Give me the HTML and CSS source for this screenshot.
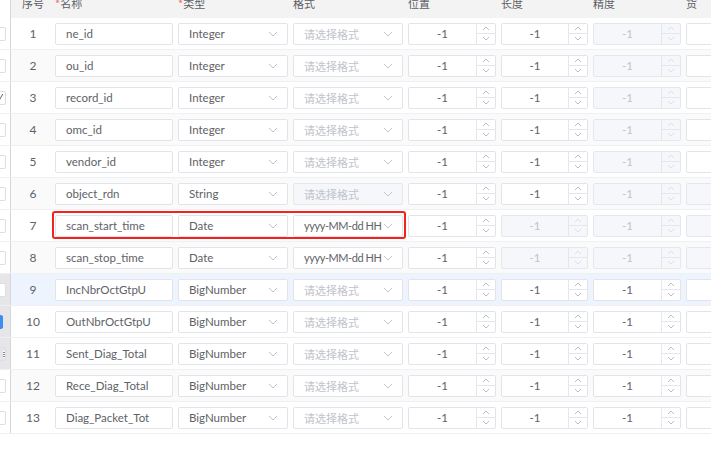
FILE: index.html
```html
<!DOCTYPE html>
<html>
<head>
<meta charset="utf-8">
<link rel="stylesheet" href="styles.css">
</head>
<body>
<div class="screen">
  <div class="row head">
    <div class="strip"></div>
    <div class="cell idx"><span class="hl">序号</span></div>
    <div class="cell"><span class="hl"><i class="req">*</i>名称</span></div>
    <div class="cell p"><span class="hl"><i class="req">*</i>类型</span></div>
    <div class="cell p"><span class="hl">格式</span></div>
    <div class="cell p"><span class="hl">位置</span></div>
    <div class="cell p"><span class="hl">长度</span></div>
    <div class="cell p"><span class="hl">精度</span></div>
    <div class="cell p"><span class="hl">货</span></div>
  </div>

  <div class="row">
    <div class="strip"><span class="cb"></span></div>
    <div class="cell idx">1</div>
    <div class="cell"><div class="inp">ne_id</div></div>
    <div class="cell p"><div class="sel"><span class="t">Integer</span><svg class="chev" viewBox="0 0 10 6"><polyline points="1,1 5,5 9,1"/></svg></div></div>
    <div class="cell p"><div class="sel ph"><span class="t">请选择格式</span><svg class="chev" viewBox="0 0 10 6"><polyline points="1,1 5,5 9,1"/></svg></div></div>
    <div class="cell p"><div class="num"><span class="v">-1</span><span class="spin"><b><svg viewBox="0 0 8 5"><polyline points="1,4 4,1 7,4"/></svg></b><b><svg viewBox="0 0 8 5"><polyline points="1,1 4,4 7,1"/></svg></b></span></div></div>
    <div class="cell p"><div class="num"><span class="v">-1</span><span class="spin"><b><svg viewBox="0 0 8 5"><polyline points="1,4 4,1 7,4"/></svg></b><b><svg viewBox="0 0 8 5"><polyline points="1,1 4,4 7,1"/></svg></b></span></div></div>
    <div class="cell p"><div class="num dis"><span class="v">-1</span><span class="spin"><b><svg viewBox="0 0 8 5"><polyline points="1,4 4,1 7,4"/></svg></b><b><svg viewBox="0 0 8 5"><polyline points="1,1 4,4 7,1"/></svg></b></span></div></div>
    <div class="cell p"><div class="num"></div></div>
  </div>

  <div class="row even">
    <div class="strip"><span class="cb"></span></div>
    <div class="cell idx">2</div>
    <div class="cell"><div class="inp">ou_id</div></div>
    <div class="cell p"><div class="sel"><span class="t">Integer</span><svg class="chev" viewBox="0 0 10 6"><polyline points="1,1 5,5 9,1"/></svg></div></div>
    <div class="cell p"><div class="sel ph"><span class="t">请选择格式</span><svg class="chev" viewBox="0 0 10 6"><polyline points="1,1 5,5 9,1"/></svg></div></div>
    <div class="cell p"><div class="num"><span class="v">-1</span><span class="spin"><b><svg viewBox="0 0 8 5"><polyline points="1,4 4,1 7,4"/></svg></b><b><svg viewBox="0 0 8 5"><polyline points="1,1 4,4 7,1"/></svg></b></span></div></div>
    <div class="cell p"><div class="num"><span class="v">-1</span><span class="spin"><b><svg viewBox="0 0 8 5"><polyline points="1,4 4,1 7,4"/></svg></b><b><svg viewBox="0 0 8 5"><polyline points="1,1 4,4 7,1"/></svg></b></span></div></div>
    <div class="cell p"><div class="num dis"><span class="v">-1</span><span class="spin"><b><svg viewBox="0 0 8 5"><polyline points="1,4 4,1 7,4"/></svg></b><b><svg viewBox="0 0 8 5"><polyline points="1,1 4,4 7,1"/></svg></b></span></div></div>
    <div class="cell p"><div class="num"></div></div>
  </div>

  <div class="row">
    <div class="strip"><span class="cb"></span><span class="slash"></span></div>
    <div class="cell idx">3</div>
    <div class="cell"><div class="inp">record_id</div></div>
    <div class="cell p"><div class="sel"><span class="t">Integer</span><svg class="chev" viewBox="0 0 10 6"><polyline points="1,1 5,5 9,1"/></svg></div></div>
    <div class="cell p"><div class="sel ph"><span class="t">请选择格式</span><svg class="chev" viewBox="0 0 10 6"><polyline points="1,1 5,5 9,1"/></svg></div></div>
    <div class="cell p"><div class="num"><span class="v">-1</span><span class="spin"><b><svg viewBox="0 0 8 5"><polyline points="1,4 4,1 7,4"/></svg></b><b><svg viewBox="0 0 8 5"><polyline points="1,1 4,4 7,1"/></svg></b></span></div></div>
    <div class="cell p"><div class="num"><span class="v">-1</span><span class="spin"><b><svg viewBox="0 0 8 5"><polyline points="1,4 4,1 7,4"/></svg></b><b><svg viewBox="0 0 8 5"><polyline points="1,1 4,4 7,1"/></svg></b></span></div></div>
    <div class="cell p"><div class="num dis"><span class="v">-1</span><span class="spin"><b><svg viewBox="0 0 8 5"><polyline points="1,4 4,1 7,4"/></svg></b><b><svg viewBox="0 0 8 5"><polyline points="1,1 4,4 7,1"/></svg></b></span></div></div>
    <div class="cell p"><div class="num"></div></div>
  </div>

  <div class="row even">
    <div class="strip"><span class="cb"></span></div>
    <div class="cell idx">4</div>
    <div class="cell"><div class="inp">omc_id</div></div>
    <div class="cell p"><div class="sel"><span class="t">Integer</span><svg class="chev" viewBox="0 0 10 6"><polyline points="1,1 5,5 9,1"/></svg></div></div>
    <div class="cell p"><div class="sel ph"><span class="t">请选择格式</span><svg class="chev" viewBox="0 0 10 6"><polyline points="1,1 5,5 9,1"/></svg></div></div>
    <div class="cell p"><div class="num"><span class="v">-1</span><span class="spin"><b><svg viewBox="0 0 8 5"><polyline points="1,4 4,1 7,4"/></svg></b><b><svg viewBox="0 0 8 5"><polyline points="1,1 4,4 7,1"/></svg></b></span></div></div>
    <div class="cell p"><div class="num"><span class="v">-1</span><span class="spin"><b><svg viewBox="0 0 8 5"><polyline points="1,4 4,1 7,4"/></svg></b><b><svg viewBox="0 0 8 5"><polyline points="1,1 4,4 7,1"/></svg></b></span></div></div>
    <div class="cell p"><div class="num dis"><span class="v">-1</span><span class="spin"><b><svg viewBox="0 0 8 5"><polyline points="1,4 4,1 7,4"/></svg></b><b><svg viewBox="0 0 8 5"><polyline points="1,1 4,4 7,1"/></svg></b></span></div></div>
    <div class="cell p"><div class="num"></div></div>
  </div>

  <div class="row">
    <div class="strip"><span class="cb"></span></div>
    <div class="cell idx">5</div>
    <div class="cell"><div class="inp">vendor_id</div></div>
    <div class="cell p"><div class="sel"><span class="t">Integer</span><svg class="chev" viewBox="0 0 10 6"><polyline points="1,1 5,5 9,1"/></svg></div></div>
    <div class="cell p"><div class="sel ph"><span class="t">请选择格式</span><svg class="chev" viewBox="0 0 10 6"><polyline points="1,1 5,5 9,1"/></svg></div></div>
    <div class="cell p"><div class="num"><span class="v">-1</span><span class="spin"><b><svg viewBox="0 0 8 5"><polyline points="1,4 4,1 7,4"/></svg></b><b><svg viewBox="0 0 8 5"><polyline points="1,1 4,4 7,1"/></svg></b></span></div></div>
    <div class="cell p"><div class="num"><span class="v">-1</span><span class="spin"><b><svg viewBox="0 0 8 5"><polyline points="1,4 4,1 7,4"/></svg></b><b><svg viewBox="0 0 8 5"><polyline points="1,1 4,4 7,1"/></svg></b></span></div></div>
    <div class="cell p"><div class="num dis"><span class="v">-1</span><span class="spin"><b><svg viewBox="0 0 8 5"><polyline points="1,4 4,1 7,4"/></svg></b><b><svg viewBox="0 0 8 5"><polyline points="1,1 4,4 7,1"/></svg></b></span></div></div>
    <div class="cell p"><div class="num"></div></div>
  </div>

  <div class="row even">
    <div class="strip"><span class="cb"></span></div>
    <div class="cell idx">6</div>
    <div class="cell"><div class="inp">object_rdn</div></div>
    <div class="cell p"><div class="sel"><span class="t">String</span><svg class="chev" viewBox="0 0 10 6"><polyline points="1,1 5,5 9,1"/></svg></div></div>
    <div class="cell p"><div class="sel ph dis"><span class="t">请选择格式</span><svg class="chev" viewBox="0 0 10 6"><polyline points="1,1 5,5 9,1"/></svg></div></div>
    <div class="cell p"><div class="num"><span class="v">-1</span><span class="spin"><b><svg viewBox="0 0 8 5"><polyline points="1,4 4,1 7,4"/></svg></b><b><svg viewBox="0 0 8 5"><polyline points="1,1 4,4 7,1"/></svg></b></span></div></div>
    <div class="cell p"><div class="num"><span class="v">-1</span><span class="spin"><b><svg viewBox="0 0 8 5"><polyline points="1,4 4,1 7,4"/></svg></b><b><svg viewBox="0 0 8 5"><polyline points="1,1 4,4 7,1"/></svg></b></span></div></div>
    <div class="cell p"><div class="num dis"><span class="v">-1</span><span class="spin"><b><svg viewBox="0 0 8 5"><polyline points="1,4 4,1 7,4"/></svg></b><b><svg viewBox="0 0 8 5"><polyline points="1,1 4,4 7,1"/></svg></b></span></div></div>
    <div class="cell p"><div class="num dis"></div></div>
  </div>

  <div class="row">
    <div class="strip"><span class="cb"></span></div>
    <div class="cell idx">7</div>
    <div class="cell"><div class="inp">scan_start_time</div></div>
    <div class="cell p"><div class="sel"><span class="t">Date</span><svg class="chev" viewBox="0 0 10 6"><polyline points="1,1 5,5 9,1"/></svg></div></div>
    <div class="cell p"><div class="sel fmt"><span class="t">yyyy-MM-dd HH</span><svg class="chev" viewBox="0 0 10 6"><polyline points="1,1 5,5 9,1"/></svg></div></div>
    <div class="cell p"><div class="num"><span class="v">-1</span><span class="spin"><b><svg viewBox="0 0 8 5"><polyline points="1,4 4,1 7,4"/></svg></b><b><svg viewBox="0 0 8 5"><polyline points="1,1 4,4 7,1"/></svg></b></span></div></div>
    <div class="cell p"><div class="num dis"><span class="v">-1</span><span class="spin"><b><svg viewBox="0 0 8 5"><polyline points="1,4 4,1 7,4"/></svg></b><b><svg viewBox="0 0 8 5"><polyline points="1,1 4,4 7,1"/></svg></b></span></div></div>
    <div class="cell p"><div class="num dis"><span class="v">-1</span><span class="spin"><b><svg viewBox="0 0 8 5"><polyline points="1,4 4,1 7,4"/></svg></b><b><svg viewBox="0 0 8 5"><polyline points="1,1 4,4 7,1"/></svg></b></span></div></div>
    <div class="cell p"><div class="num dis"></div></div>
    <div class="mark"></div>
  </div>

  <div class="row even">
    <div class="strip"><span class="cb"></span></div>
    <div class="cell idx">8</div>
    <div class="cell"><div class="inp">scan_stop_time</div></div>
    <div class="cell p"><div class="sel"><span class="t">Date</span><svg class="chev" viewBox="0 0 10 6"><polyline points="1,1 5,5 9,1"/></svg></div></div>
    <div class="cell p"><div class="sel fmt"><span class="t">yyyy-MM-dd HH</span><svg class="chev" viewBox="0 0 10 6"><polyline points="1,1 5,5 9,1"/></svg></div></div>
    <div class="cell p"><div class="num"><span class="v">-1</span><span class="spin"><b><svg viewBox="0 0 8 5"><polyline points="1,4 4,1 7,4"/></svg></b><b><svg viewBox="0 0 8 5"><polyline points="1,1 4,4 7,1"/></svg></b></span></div></div>
    <div class="cell p"><div class="num dis"><span class="v">-1</span><span class="spin"><b><svg viewBox="0 0 8 5"><polyline points="1,4 4,1 7,4"/></svg></b><b><svg viewBox="0 0 8 5"><polyline points="1,1 4,4 7,1"/></svg></b></span></div></div>
    <div class="cell p"><div class="num dis"><span class="v">-1</span><span class="spin"><b><svg viewBox="0 0 8 5"><polyline points="1,4 4,1 7,4"/></svg></b><b><svg viewBox="0 0 8 5"><polyline points="1,1 4,4 7,1"/></svg></b></span></div></div>
    <div class="cell p"><div class="num dis"></div></div>
  </div>

  <div class="row hover">
    <div class="strip gray"><span class="cb"></span></div>
    <div class="cell idx">9</div>
    <div class="cell"><div class="inp">IncNbrOctGtpU</div></div>
    <div class="cell p"><div class="sel"><span class="t">BigNumber</span><svg class="chev" viewBox="0 0 10 6"><polyline points="1,1 5,5 9,1"/></svg></div></div>
    <div class="cell p"><div class="sel ph"><span class="t">请选择格式</span><svg class="chev" viewBox="0 0 10 6"><polyline points="1,1 5,5 9,1"/></svg></div></div>
    <div class="cell p"><div class="num"><span class="v">-1</span><span class="spin"><b><svg viewBox="0 0 8 5"><polyline points="1,4 4,1 7,4"/></svg></b><b><svg viewBox="0 0 8 5"><polyline points="1,1 4,4 7,1"/></svg></b></span></div></div>
    <div class="cell p"><div class="num"><span class="v">-1</span><span class="spin"><b><svg viewBox="0 0 8 5"><polyline points="1,4 4,1 7,4"/></svg></b><b><svg viewBox="0 0 8 5"><polyline points="1,1 4,4 7,1"/></svg></b></span></div></div>
    <div class="cell p"><div class="num"><span class="v">-1</span><span class="spin"><b><svg viewBox="0 0 8 5"><polyline points="1,4 4,1 7,4"/></svg></b><b><svg viewBox="0 0 8 5"><polyline points="1,1 4,4 7,1"/></svg></b></span></div></div>
    <div class="cell p"><div class="num"></div></div>
  </div>

  <div class="row">
    <div class="strip gray"><span class="cb on"></span></div>
    <div class="cell idx">10</div>
    <div class="cell"><div class="inp">OutNbrOctGtpU</div></div>
    <div class="cell p"><div class="sel"><span class="t">BigNumber</span><svg class="chev" viewBox="0 0 10 6"><polyline points="1,1 5,5 9,1"/></svg></div></div>
    <div class="cell p"><div class="sel ph"><span class="t">请选择格式</span><svg class="chev" viewBox="0 0 10 6"><polyline points="1,1 5,5 9,1"/></svg></div></div>
    <div class="cell p"><div class="num"><span class="v">-1</span><span class="spin"><b><svg viewBox="0 0 8 5"><polyline points="1,4 4,1 7,4"/></svg></b><b><svg viewBox="0 0 8 5"><polyline points="1,1 4,4 7,1"/></svg></b></span></div></div>
    <div class="cell p"><div class="num"><span class="v">-1</span><span class="spin"><b><svg viewBox="0 0 8 5"><polyline points="1,4 4,1 7,4"/></svg></b><b><svg viewBox="0 0 8 5"><polyline points="1,1 4,4 7,1"/></svg></b></span></div></div>
    <div class="cell p"><div class="num"><span class="v">-1</span><span class="spin"><b><svg viewBox="0 0 8 5"><polyline points="1,4 4,1 7,4"/></svg></b><b><svg viewBox="0 0 8 5"><polyline points="1,1 4,4 7,1"/></svg></b></span></div></div>
    <div class="cell p"><div class="num"></div></div>
  </div>

  <div class="row">
    <div class="strip gray"><span class="cb menu"></span></div>
    <div class="cell idx">11</div>
    <div class="cell"><div class="inp">Sent_Diag_Total</div></div>
    <div class="cell p"><div class="sel"><span class="t">BigNumber</span><svg class="chev" viewBox="0 0 10 6"><polyline points="1,1 5,5 9,1"/></svg></div></div>
    <div class="cell p"><div class="sel ph"><span class="t">请选择格式</span><svg class="chev" viewBox="0 0 10 6"><polyline points="1,1 5,5 9,1"/></svg></div></div>
    <div class="cell p"><div class="num"><span class="v">-1</span><span class="spin"><b><svg viewBox="0 0 8 5"><polyline points="1,4 4,1 7,4"/></svg></b><b><svg viewBox="0 0 8 5"><polyline points="1,1 4,4 7,1"/></svg></b></span></div></div>
    <div class="cell p"><div class="num"><span class="v">-1</span><span class="spin"><b><svg viewBox="0 0 8 5"><polyline points="1,4 4,1 7,4"/></svg></b><b><svg viewBox="0 0 8 5"><polyline points="1,1 4,4 7,1"/></svg></b></span></div></div>
    <div class="cell p"><div class="num"><span class="v">-1</span><span class="spin"><b><svg viewBox="0 0 8 5"><polyline points="1,4 4,1 7,4"/></svg></b><b><svg viewBox="0 0 8 5"><polyline points="1,1 4,4 7,1"/></svg></b></span></div></div>
    <div class="cell p"><div class="num"></div></div>
  </div>

  <div class="row even">
    <div class="strip"><span class="cb"></span></div>
    <div class="cell idx">12</div>
    <div class="cell"><div class="inp">Rece_Diag_Total</div></div>
    <div class="cell p"><div class="sel"><span class="t">BigNumber</span><svg class="chev" viewBox="0 0 10 6"><polyline points="1,1 5,5 9,1"/></svg></div></div>
    <div class="cell p"><div class="sel ph"><span class="t">请选择格式</span><svg class="chev" viewBox="0 0 10 6"><polyline points="1,1 5,5 9,1"/></svg></div></div>
    <div class="cell p"><div class="num"><span class="v">-1</span><span class="spin"><b><svg viewBox="0 0 8 5"><polyline points="1,4 4,1 7,4"/></svg></b><b><svg viewBox="0 0 8 5"><polyline points="1,1 4,4 7,1"/></svg></b></span></div></div>
    <div class="cell p"><div class="num"><span class="v">-1</span><span class="spin"><b><svg viewBox="0 0 8 5"><polyline points="1,4 4,1 7,4"/></svg></b><b><svg viewBox="0 0 8 5"><polyline points="1,1 4,4 7,1"/></svg></b></span></div></div>
    <div class="cell p"><div class="num"><span class="v">-1</span><span class="spin"><b><svg viewBox="0 0 8 5"><polyline points="1,4 4,1 7,4"/></svg></b><b><svg viewBox="0 0 8 5"><polyline points="1,1 4,4 7,1"/></svg></b></span></div></div>
    <div class="cell p"><div class="num"></div></div>
  </div>

  <div class="row">
    <div class="strip"><span class="cb"></span></div>
    <div class="cell idx">13</div>
    <div class="cell"><div class="inp">Diag_Packet_Tot</div></div>
    <div class="cell p"><div class="sel"><span class="t">BigNumber</span><svg class="chev" viewBox="0 0 10 6"><polyline points="1,1 5,5 9,1"/></svg></div></div>
    <div class="cell p"><div class="sel ph"><span class="t">请选择格式</span><svg class="chev" viewBox="0 0 10 6"><polyline points="1,1 5,5 9,1"/></svg></div></div>
    <div class="cell p"><div class="num"><span class="v">-1</span><span class="spin"><b><svg viewBox="0 0 8 5"><polyline points="1,4 4,1 7,4"/></svg></b><b><svg viewBox="0 0 8 5"><polyline points="1,1 4,4 7,1"/></svg></b></span></div></div>
    <div class="cell p"><div class="num"><span class="v">-1</span><span class="spin"><b><svg viewBox="0 0 8 5"><polyline points="1,4 4,1 7,4"/></svg></b><b><svg viewBox="0 0 8 5"><polyline points="1,1 4,4 7,1"/></svg></b></span></div></div>
    <div class="cell p"><div class="num"><span class="v">-1</span><span class="spin"><b><svg viewBox="0 0 8 5"><polyline points="1,4 4,1 7,4"/></svg></b><b><svg viewBox="0 0 8 5"><polyline points="1,1 4,4 7,1"/></svg></b></span></div></div>
    <div class="cell p"><div class="num"></div></div>
  </div>
</div>
</body>
</html>
```

FILE: styles.css
```css
* { box-sizing: border-box; }
html, body { margin: 0; padding: 0; background: #fff; }
body {
  font-family: Lato, "Noto Sans CJK SC", sans-serif;
  font-size: 11.5px;
  color: #606266;
}
.screen {
  width: 711px;
  height: 456px;
  overflow: hidden;
}
.row {
  position: relative;
  display: grid;
  grid-template-columns: 11px 44px 118px 115px 115px 93px 92px 93px 105px;
  height: 32px;
  align-items: center;
  border-bottom: 1px solid #eef0f4;
  background: #fff;
  width: 790px;
}
.row.even { background: #fafafa; }
.row.hover { background: #edf4fd; }
.row.head {
  height: 18px;
  background: #f3f3f4;
  align-items: start;
  overflow: hidden;
  border-bottom: none;
}
.hl {
  display: block;
  font-family: "Noto Sans CJK SC", sans-serif;
  font-size: 11px;
  line-height: 12px;
  margin-top: -3px;
  white-space: nowrap;
  color: #5c5e63;
}
.req { font-style: normal; color: #f56c6c; }
.head .idx .hl { text-align: center; }
.strip {
  position: relative;
  height: 100%;
  border-right: 1px solid #d6d6d6;
  background: #fff;
  overflow: hidden;
}
.strip.gray { background: #e6e6e8; }
.cb {
  position: absolute;
  left: -8px;
  top: 9px;
  width: 14px;
  height: 14px;
  border: 1px solid #dcdfe6;
  border-radius: 2px;
  background: #fff;
}
.cb.on { background: #3e8ef0; border-color: #3e8ef0; left: -11px; }
.cb.menu {
  background: repeating-linear-gradient(#fff 0 1px, #8a8a8a 1px 2px);
  background-size: 4px 7px;
  background-position: 10px 3px;
  background-repeat: no-repeat;
}
.slash {
  position: absolute;
  left: 0;
  top: 12px;
  width: 1px;
  height: 8px;
  background: #666;
  transform: skewX(-30deg);
}
.cell { min-width: 0; }
.cell.p { padding-left: 5px; }
.idx { text-align: center; font-size: 12px; }
.inp, .sel, .num {
  height: 22px;
  border: 1px solid #e2e4ea;
  border-radius: 2px;
  background: #fff;
  line-height: 20px;
  white-space: nowrap;
  overflow: hidden;
}
.inp { padding-left: 10px; }
.sel {
  position: relative;
  padding-left: 10px;
  padding-right: 25px;
}
.sel .t {
  display: block;
  overflow: hidden;
  white-space: nowrap;
}
.sel.fmt {
  padding-right: 19px;
  font-size: 11px;
  letter-spacing: -0.45px;
}
.sel.ph {
  color: #c0c4cc;
  font-family: "Noto Sans CJK SC", sans-serif;
  font-size: 11px;
}
.sel.dis, .num.dis { background: #f5f7fa; border-color: #e4e7ed; }
.chev {
  position: absolute;
  right: 9px;
  top: 7px;
  width: 10px;
  height: 6px;
  fill: none;
  stroke: #c0c4cc;
  stroke-width: 1;
}
.num { display: flex; }
.num .v {
  flex: 1;
  text-align: center;
  color: #606266;
}
.num.dis .v { color: #c0c4cc; }
.spin {
  width: 19px;
  display: flex;
  flex-direction: column;
  border-left: 1px solid #e4e7ed;
}
.spin b {
  flex: 1;
  display: flex;
  align-items: center;
  justify-content: center;
}
.spin b + b { border-top: 1px solid #e4e7ed; }
.spin svg {
  width: 8px;
  height: 5px;
  fill: none;
  stroke: #b8bcc4;
  stroke-width: 1;
}
.num.dis .spin svg { stroke: #dcdfe6; }
.mark {
  position: absolute;
  left: 52px;
  top: 1px;
  width: 354px;
  height: 28px;
  border: 2px solid #f2231f;
  border-radius: 3px;
  pointer-events: none;
}
```
